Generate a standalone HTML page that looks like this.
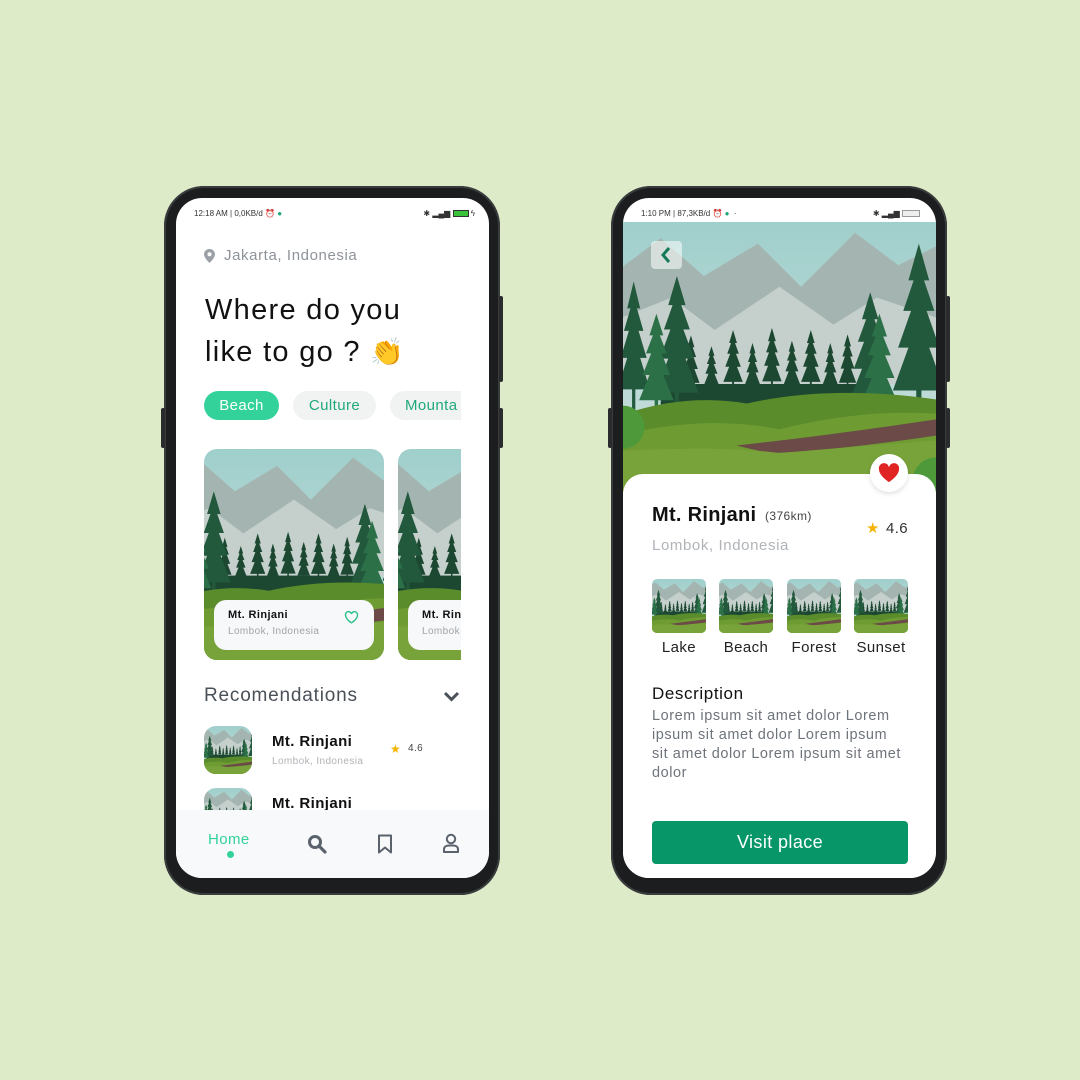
<!DOCTYPE html>
<html><head><meta charset="utf-8"><style>
*{margin:0;padding:0;box-sizing:border-box}
body{width:1080px;height:1080px;background:#ddebc9;position:relative;overflow:hidden;font-family:"Liberation Sans",sans-serif;color:#111;letter-spacing:.4px}
.a{position:absolute}
.phone{position:absolute;background:#1c1d1f;border-radius:40px;box-shadow:0 0 0 2px #3a3b3d inset}
.screen{position:absolute;background:#fff;border-radius:26px;overflow:hidden}
.btn{position:absolute;background:#2a2b2d;width:4px;border-radius:2px}
.sb{font-size:8px;color:#333;letter-spacing:0}
.chip{position:absolute;height:29px;border-radius:15px;font-size:15px;line-height:29px;text-align:center;background:#f1f3f3;color:#1fa97a}
svg.l{display:block;width:100%;height:100%}
.thumb{position:absolute;border-radius:5px;overflow:hidden;width:54px;height:54px}
.cap{position:absolute;font-size:15px;color:#222;width:70px;text-align:center}
</style></head><body>
<svg width="0" height="0" style="position:absolute">
<defs>
<linearGradient id="sky" x1="0" y1="0" x2="0" y2="1"><stop offset="0" stop-color="#9fcfcc"/><stop offset="1" stop-color="#cfe0dc"/></linearGradient>
<symbol id="tr" viewBox="0 0 20 60" preserveAspectRatio="none"><polygon points="10,0 14,12 12,12 16,22 13,22 18,34 14,34 20,48 11,48 11,60 9,60 9,48 0,48 6,34 2,34 7,22 4,22 8,12 6,12"/></symbol>
<symbol id="land" viewBox="0 0 300 250" preserveAspectRatio="xMidYMid slice">
<rect width="300" height="250" fill="url(#sky)"/>
<polygon points="0,45 40,15 80,50 130,20 170,60 220,10 260,40 300,20 300,140 0,140" fill="#a4b5b1"/>
<polygon points="0,90 50,70 90,100 150,60 200,95 240,70 300,90 300,150 0,150" fill="#c5cfcc"/>
<g fill="#1c4832">
<use href="#tr" x="60" y="105" width="16" height="55"/><use href="#tr" x="80" y="115" width="14" height="45"/>
<use href="#tr" x="98" y="100" width="18" height="60"/><use href="#tr" x="118" y="112" width="14" height="48"/>
<use href="#tr" x="134" y="98" width="18" height="62"/><use href="#tr" x="154" y="110" width="15" height="50"/>
<use href="#tr" x="170" y="100" width="18" height="60"/><use href="#tr" x="190" y="112" width="14" height="48"/>
<use href="#tr" x="205" y="104" width="16" height="56"/>
<rect x="40" y="150" width="200" height="20"/>
</g>
<g fill="#22583c">
<use href="#tr" x="0" y="55" width="30" height="125"/><use href="#tr" x="35" y="50" width="40" height="135"/>
<use href="#tr" x="215" y="65" width="38" height="125"/><use href="#tr" x="255" y="20" width="48" height="170"/>
</g>
<g fill="#2c7048">
<use href="#tr" x="20" y="85" width="32" height="100"/><use href="#tr" x="225" y="85" width="35" height="105"/>
</g>
<path d="M0,180 Q60,158 120,168 Q200,150 300,165 L300,250 L0,250Z" fill="#5b8c2c"/>
<path d="M0,198 Q80,178 150,192 Q230,172 300,178 L300,250 L0,250Z" fill="#6e9c33"/>
<path d="M110,207 Q200,197 300,182 L300,197 Q200,212 140,214Z" fill="#6b4a47"/>
<path d="M0,212 Q100,207 150,214 Q230,207 300,202 L300,250 L0,250Z" fill="#78a23a"/>
<circle cx="5" cy="190" r="20" fill="#4e9a3a"/><circle cx="295" cy="240" r="22" fill="#4e9a3a"/>
</symbol>
</defs></svg>

<!-- LEFT PHONE -->
<div class="phone" style="left:164px;top:186px;width:336px;height:709px"></div>
<div class="btn" style="left:161px;top:408px;height:40px"></div>
<div class="btn" style="left:499px;top:296px;height:86px"></div>
<div class="btn" style="left:499px;top:408px;height:40px"></div>
<div class="screen" style="left:176px;top:198px;width:313px;height:680px">
 <div class="a sb" style="left:18px;top:11px">12:18 AM | 0,0KB/d ⏰ <span style="color:#1fa97a">●</span></div>
 <div class="a sb" style="right:14px;top:11px">✱ ▂▄▆ <span style="display:inline-block;width:16px;height:7px;background:#3ac23a;border:1px solid #333;vertical-align:middle"></span> ϟ</div>
 <svg class="a" style="left:28px;top:51px" width="11" height="14" viewBox="0 0 11 14"><path d="M5.5 0C2.5 0 0 2.3 0 5.3 0 9 5.5 14 5.5 14S11 9 11 5.3C11 2.3 8.5 0 5.5 0Z" fill="#9aa0a6"/><circle cx="5.5" cy="5.3" r="2" fill="#fff"/></svg>
 <div class="a" style="left:48px;top:49px;font-size:15px;color:#8e9399;letter-spacing:.6px">Jakarta, Indonesia</div>
 <div class="a" style="left:29px;top:93px;font-size:29px;line-height:39px;color:#111;letter-spacing:1.3px;white-space:nowrap">Where do you<br>like to go ? <span style="font-family:'Noto Sans CJK JP',sans-serif;font-size:27px">👏</span></div>
 <div class="chip" style="left:28px;top:193px;width:75px;background:#33d29a;color:#fff">Beach</div>
 <div class="chip" style="left:117px;top:193px;width:83px">Culture</div>
 <div class="chip" style="left:214px;top:193px;width:99px;text-align:left;padding-left:15px">Mounta</div>
 <div class="a" style="left:285px;top:190px;width:28px;height:35px;background:#fff"></div>
 <div class="a" style="left:28px;top:251px;width:180px;height:211px;border-radius:13px;overflow:hidden"><svg class="l"><use href="#land"/></svg></div>
 <div class="a" style="left:222px;top:251px;width:70px;height:211px;border-radius:13px 0 0 13px;overflow:hidden"><svg class="l" style="width:180px"><use href="#land"/></svg></div>
 <div class="a" style="left:285px;top:240px;width:28px;height:230px;background:#fff"></div>
 <div class="a" style="left:38px;top:402px;width:160px;height:50px;background:#f7f8f9;border-radius:12px"></div>
 <div class="a" style="left:52px;top:411px;font-size:11px;font-weight:bold">Mt. Rinjani</div>
 <div class="a" style="left:52px;top:428px;font-size:10px;color:#a0a4a8">Lombok, Indonesia</div>
 <svg class="a" style="left:168px;top:413px" width="15" height="13" viewBox="0 0 24 22"><path d="M12 20S2 14 2 7.5A5 5 0 0 1 12 5 5 5 0 0 1 22 7.5C22 14 12 20 12 20Z" fill="none" stroke="#2cc08a" stroke-width="2.4"/></svg>
 <div class="a" style="left:232px;top:402px;width:53px;height:50px;background:#f7f8f9;border-radius:12px 0 0 12px"></div>
 <div class="a" style="left:246px;top:411px;font-size:11px;font-weight:bold;width:39px;overflow:hidden;white-space:nowrap">Mt. Rinjani</div>
 <div class="a" style="left:246px;top:428px;font-size:10px;color:#a0a4a8;width:39px;overflow:hidden;white-space:nowrap">Lombok</div>
 <div class="a" style="left:28px;top:487px;font-size:19px;color:#4a5058;letter-spacing:.8px">Recomendations</div>
 <svg class="a" style="left:267px;top:493px" width="17" height="11" viewBox="0 0 17 11"><path d="M2 2L8.5 8.5 15 2" fill="none" stroke="#4a5058" stroke-width="3"/></svg>
 <div class="a" style="left:28px;top:528px;width:48px;height:48px;border-radius:12px;overflow:hidden"><svg class="l"><use href="#land"/></svg></div>
 <div class="a" style="left:96px;top:535px;font-size:15px;font-weight:bold">Mt. Rinjani</div>
 <div class="a" style="left:96px;top:558px;font-size:10px;color:#b0b4b8">Lombok, Indonesia</div>
 <div class="a" style="left:214px;top:544px;font-size:12px;color:#f4b400">★</div>
 <div class="a" style="left:232px;top:545px;font-size:10px;color:#444">4.6</div>
 <div class="a" style="left:28px;top:590px;width:48px;height:48px;border-radius:12px;overflow:hidden"><svg class="l"><use href="#land"/></svg></div>
 <div class="a" style="left:96px;top:597px;font-size:15px;font-weight:bold">Mt. Rinjani</div>
 <div class="a" style="left:0;top:612px;width:313px;height:68px;background:#f7f9fa"></div>
 <div class="a" style="left:32px;top:633px;font-size:15px;color:#33d29a">Home</div>
 <div class="a" style="left:51px;top:653px;width:7px;height:7px;border-radius:50%;background:#33d29a"></div>
 <svg class="a" style="left:131px;top:636px" width="20" height="20" viewBox="0 0 20 20"><circle cx="8" cy="8" r="5.5" fill="none" stroke="#5a626b" stroke-width="3"/><path d="M12 12L18 18" stroke="#5a626b" stroke-width="3.2" stroke-linecap="round"/></svg>
 <svg class="a" style="left:201px;top:636px" width="16" height="20" viewBox="0 0 16 20"><path d="M2 1.5H14V18.5L8 13.5 2 18.5Z" fill="none" stroke="#5a626b" stroke-width="2" stroke-linejoin="round"/></svg>
 <svg class="a" style="left:266px;top:635px" width="18" height="20" viewBox="0 0 18 20"><circle cx="9" cy="6" r="4.2" fill="none" stroke="#5a626b" stroke-width="2"/><path d="M2 19V16.5C2 14 4 12.5 6.5 12.5H11.5C14 12.5 16 14 16 16.5V19Z" fill="none" stroke="#5a626b" stroke-width="2" stroke-linejoin="round"/></svg>
</div>

<!-- RIGHT PHONE -->
<div class="phone" style="left:611px;top:186px;width:336px;height:709px"></div>
<div class="btn" style="left:608px;top:408px;height:40px"></div>
<div class="btn" style="left:946px;top:296px;height:86px"></div>
<div class="btn" style="left:946px;top:408px;height:40px"></div>
<div class="screen" style="left:623px;top:198px;width:313px;height:680px">
 <div class="a sb" style="left:18px;top:11px">1:10 PM | 87,3KB/d ⏰ <span style="color:#1fa97a">●</span> &nbsp;·</div>
 <div class="a sb" style="right:16px;top:11px">✱ ▂▄▆ <span style="display:inline-block;width:18px;height:7px;border:1px solid #999;background:#eee;vertical-align:middle"></span></div>
 <div class="a" style="left:0;top:24px;width:313px;height:270px;overflow:hidden"><svg class="l"><use href="#land"/></svg></div>
 <div class="a" style="left:28px;top:43px;width:31px;height:28px;border-radius:4px;background:rgba(255,255,255,.55)"></div>
 <svg class="a" style="left:37px;top:48px" width="12" height="18" viewBox="0 0 12 18"><path d="M9 2L3 9 9 16" fill="none" stroke="#137a55" stroke-width="3"/></svg>
 <div class="a" style="left:0;top:276px;width:313px;height:420px;background:#fff;border-radius:20px 20px 0 0"></div>
 <div class="a" style="left:247px;top:256px;width:38px;height:38px;border-radius:50%;background:#fff;box-shadow:0 2px 5px rgba(0,0,0,.12)"></div>
 <svg class="a" style="left:255px;top:265px" width="22" height="20" viewBox="0 0 24 22"><path d="M12 21S1 14 1 7A5.5 5.5 0 0 1 12 4.5 5.5 5.5 0 0 1 23 7C23 14 12 21 12 21Z" fill="#e02424"/></svg>
 <div class="a" style="left:29px;top:306px;font-size:20px;font-weight:bold;letter-spacing:.3px">Mt. Rinjani</div>
 <div class="a" style="left:142px;top:311px;font-size:12px;color:#444">(376km)</div>
 <div class="a" style="left:243px;top:321px;font-size:15px;color:#f4b400">★</div>
 <div class="a" style="left:263px;top:322px;font-size:15px;color:#333">4.6</div>
 <div class="a" style="left:29px;top:339px;font-size:15px;color:#b0b4b8;letter-spacing:.6px">Lombok, Indonesia</div>
 <div class="thumb" style="left:29px;top:381px"><svg class="l"><use href="#land"/></svg></div>
 <div class="thumb" style="left:96px;top:381px"><svg class="l"><use href="#land"/></svg></div>
 <div class="thumb" style="left:164px;top:381px"><svg class="l"><use href="#land"/></svg></div>
 <div class="thumb" style="left:231px;top:381px"><svg class="l"><use href="#land"/></svg></div>
 <div class="cap" style="left:21px;top:441px">Lake</div>
 <div class="cap" style="left:88px;top:441px">Beach</div>
 <div class="cap" style="left:156px;top:441px">Forest</div>
 <div class="cap" style="left:223px;top:441px">Sunset</div>
 <div class="a" style="left:29px;top:486px;font-size:17px;color:#111;letter-spacing:.6px">Description</div>
 <div class="a" style="left:29px;top:509px;width:250px;font-size:14.5px;line-height:19px;color:#6e747b;letter-spacing:.55px">Lorem ipsum sit amet dolor Lorem ipsum sit amet dolor Lorem ipsum sit amet dolor Lorem ipsum sit amet dolor</div>
 <div class="a" style="left:29px;top:623px;width:256px;height:43px;border-radius:4px;background:#069668;color:#fff;font-size:18px;line-height:43px;text-align:center">Visit place</div>
</div>
</body></html>
